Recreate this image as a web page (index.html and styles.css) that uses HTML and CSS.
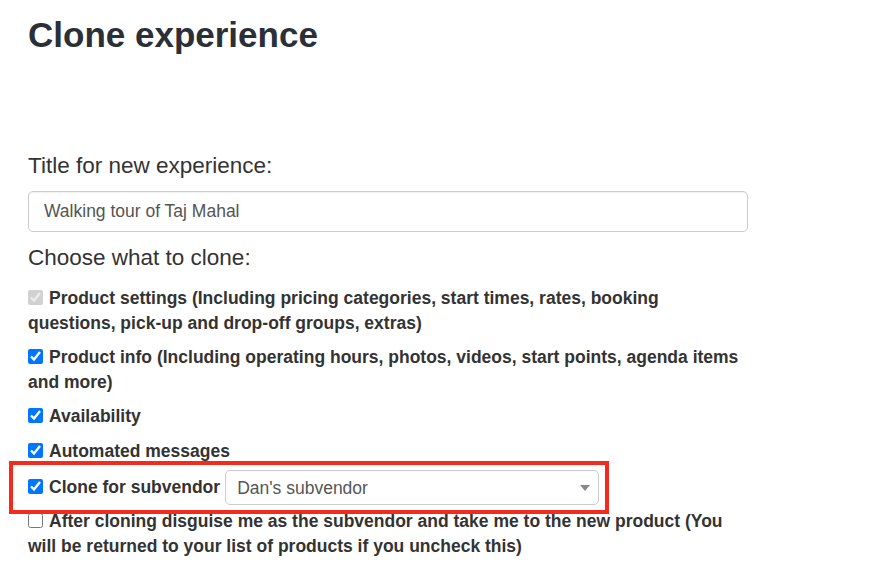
FILE: index.html
```html
<!DOCTYPE html>
<html lang="en">
<head>
  <meta charset="UTF-8" />
  <title>Clone experience</title>
  <link rel="stylesheet" href="styles.css">
</head>
<body>
  <main class="page">
    <h1>Clone experience</h1>
    <form class="clone-form">
      <label class="field-label" for="title">Title for new experience:</label>
      <input class="text-input" type="text" id="title" value="Walking tour of Taj Mahal">

      <p class="field-label">Choose what to clone:</p>

      <label class="option first">
        <input type="checkbox" checked disabled>Product settings (Including pricing categories, start times, rates, booking questions, pick-up and drop-off groups, extras)
      </label>
      <label class="option">
        <input type="checkbox" checked>Product info (Including operating hours, photos, videos, start points, agenda items and more)
      </label>
      <label class="option">
        <input type="checkbox" checked>Availability
      </label>
      <label class="option spaced">
        <input type="checkbox" checked>Automated messages
      </label>
      <div class="option subvendor">
        <label class="sub-label"><input type="checkbox" checked>Clone for subvendor</label>
        <span class="select-wrap">
          <select class="select-input">
            <option>Dan's subvendor</option>
          </select>
        </span>
      </div>
      <label class="option after-sub">
        <input type="checkbox">After cloning disguise me as the subvendor and take me to the new product (You will be returned to your list of products if you uncheck this)
      </label>
    </form>
  </main>
</body>
</html>
```

FILE: styles.css
```css
body {
  margin: 0;
  padding: 0;
  background: #fff;
  color: #333;
  font-family: "Liberation Sans", Arial, sans-serif;
}
.page {
  width: 720px;
  padding: 0 28px;
}
h1 {
  margin: 16px 0 0;
  font-size: 35px;
  line-height: 38px;
  font-weight: bold;
  color: #2a2f38;
}
.clone-form {
  display: flex;
  flex-direction: column;
  align-items: flex-start;
}
.field-label {
  display: block;
  margin: 10px 0 0;
  font-size: 22.5px;
  line-height: 31px;
  font-weight: normal;
  color: #333;
}
.clone-form > .field-label:first-child {
  margin-top: 96px;
}
.text-input {
  box-sizing: border-box;
  width: 720px;
  height: 41px;
  margin: 10px 0 0;
  padding: 0 15px;
  border: 1px solid #ccc;
  border-radius: 5px;
  font-family: inherit;
  font-size: 17.5px;
  color: #555;
  box-shadow: inset 0 1px 1px rgba(0,0,0,0.06);
}
.option {
  display: block;
  margin-top: 9px;
  font-size: 17.5px;
  line-height: 25px;
  font-weight: bold;
  color: #333;
}
.option.first {
  margin-top: 13px;
}
.option.spaced {
  margin-top: 10px;
}
.option input[type="checkbox"] {
  width: 15px;
  height: 15px;
  margin: 0 6px 0 0;
  vertical-align: -1px;
}
.subvendor {
  position: relative;
  display: flex;
  align-items: center;
  margin-top: 6px;
}
.subvendor::after {
  content: "";
  position: absolute;
  top: -9px;
  bottom: -9px;
  left: -19px;
  right: -10px;
  border: 4px solid #f42a1c;
  pointer-events: none;
}
.sub-label {
  white-space: nowrap;
}
.select-wrap {
  position: relative;
  margin-left: 5px;
}
.select-wrap::after {
  content: "";
  position: absolute;
  right: 9px;
  top: 15px;
  border-left: 5px solid transparent;
  border-right: 5px solid transparent;
  border-top: 6px solid #888;
}
.select-input {
  appearance: none;
  -webkit-appearance: none;
  box-sizing: border-box;
  width: 374px;
  height: 35px;
  padding: 0 30px 0 11px;
  border: 1px solid #ccc;
  border-radius: 5px;
  background: #fff;
  font-family: inherit;
  font-size: 17.5px;
  font-weight: normal;
  color: #555;
}
.option.after-sub {
  margin-top: 4px;
}
```
